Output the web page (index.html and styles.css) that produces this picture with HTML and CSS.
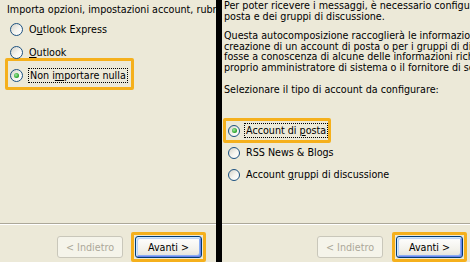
FILE: index.html
```html
<!DOCTYPE html>
<html lang="it">
<head>
    <meta charset="UTF-8">
    <title>Importazione guidata</title>
    <link rel="stylesheet" href="styles.css">
</head>
<body>
    <div class="pane left">
        <div class="content">
            <p class="intro">Importa opzioni, impostazioni account, rubrica e messaggi da:</p>
            <div class="options">
                <div class="option">
                    <span class="radio"></span>
                    <span class="label">O<u>u</u>tlook Express</span>
                </div>
                <div class="option">
                    <span class="radio"></span>
                    <span class="label"><u>O</u>utlook</span>
                </div>
                <div class="option focused">
                    <span class="radio checked"></span>
                    <span class="label dotted">Non i<u>m</u>portare nulla</span>
                </div>
            </div>
        </div>
        <div class="footer">
            <div class="sep"></div>
            <div class="buttons">
                <button class="btn disabled">&lt; Indietro</button>
                <div class="ring"><button class="btn primary">Avanti &gt;</button></div>
            </div>
        </div>
    </div>

    <div class="divider"></div>

    <div class="pane right">
        <div class="content">
            <p class="text">Per poter ricevere i messaggi, è necessario configurare un account di<br>posta e dei gruppi di discussione.</p>
            <p class="text gap">Questa autocomposizione raccoglierà le informazioni necessarie per la<br>creazione di un account di posta o per i gruppi di discussione. Se non si<br>fosse a conoscenza di alcune delle informazioni richieste, contattare il<br>proprio amministratore di sistema o il fornitore di servizi Internet.</p>
            <p class="text gap2">Selezionare il tipo di account da configurare:</p>
            <div class="options">
                <div class="option focused">
                    <span class="radio checked"></span>
                    <span class="label dotted">Account di <u>p</u>osta</span>
                </div>
                <div class="option">
                    <span class="radio"></span>
                    <span class="label">RSS News &amp; Blogs</span>
                </div>
                <div class="option">
                    <span class="radio"></span>
                    <span class="label">Account <u>g</u>ruppi di discussione</span>
                </div>
            </div>
        </div>
        <div class="footer">
            <div class="sep"></div>
            <div class="buttons">
                <button class="btn disabled">&lt; Indietro</button>
                <div class="ring"><button class="btn primary">Avanti &gt;</button></div>
            </div>
        </div>
    </div>
</body>
</html>
```

FILE: styles.css
```css
body {
    margin: 0;
    width: 470px;
    height: 262px;
    display: flex;
    background: #000;
    font-family: "DejaVu Sans", sans-serif;
    font-size: 9.6px;
    color: #000;
    overflow: hidden;
}
.pane {
    display: flex;
    flex-direction: column;
    height: 262px;
    background: #ece9d8;
    overflow: hidden;
    white-space: nowrap;
}
.left {
    width: 216px;
}
.divider {
    width: 6px;
    background: #000;
}
.right {
    flex: 1;
}
.content {
    flex: 1;
}
p {
    margin: 0;
}
.intro {
    padding: 4px 0 0 7px;
    line-height: 12px;
}
.text {
    padding-left: 2px;
    line-height: 10.5px;
}
.right .text:first-child {
    padding-top: 1px;
}
.gap {
    margin-top: 9px;
}
.gap2 {
    margin-top: 12px;
}

/* radio list */
.options {
    display: flex;
    flex-direction: column;
    align-items: flex-start;
    gap: 10px;
}
.left .options {
    padding: 7px 0 0 10px;
}
.right .options {
    padding: 29px 0 0 6px;
}
.option {
    display: flex;
    align-items: center;
    gap: 6px;
    height: 13px;
}
.right .option {
    height: 12px;
}
.option.focused {
    border: 3px solid #f5b01c;
    border-radius: 2px;
}
.left .option.focused {
    margin: -11px 0 -8px -5px;
    padding: 8px 4px 5px 2px;
}
.right .option.focused {
    margin: -7px 0 -6px -5px;
    padding: 4px 1px 3px 2px;
    gap: 5px;
}
.radio {
    position: relative;
    box-sizing: border-box;
    width: 13px;
    height: 13px;
    border: 1px solid #1c5180;
    border-radius: 50%;
    background: linear-gradient(135deg, #d4d2c8, #f6f5f0 55%, #fff);
    flex: none;
}
.right .radio {
    width: 12px;
    height: 12px;
}
.radio.checked::after {
    content: "";
    position: absolute;
    left: 50%;
    top: 50%;
    width: 5px;
    height: 5px;
    margin: -2.5px 0 0 -2.5px;
    border-radius: 50%;
    background: radial-gradient(circle at 40% 40%, #a4e7a4, #21a121 70%);
}
.label u {
    text-decoration-thickness: 1px;
}
.dotted {
    outline: 1px dotted #000;
    padding: 1px;
}

/* footer */
.sep {
    height: 1px;
    background: #aca899;
    border-bottom: 1px solid #fff;
}
.buttons {
    display: flex;
    justify-content: flex-end;
    align-items: center;
    margin-top: 7px;
}
.left .buttons {
    gap: 8px;
    padding-right: 10px;
}
.right .buttons {
    gap: 9px;
    padding-right: 3px;
}
.ring {
    border: 3px solid #f5b01c;
    border-radius: 2px;
    padding: 1px;
}
.btn {
    box-sizing: border-box;
    width: 66px;
    height: 22px;
    font: inherit;
    border-radius: 3px;
    padding: 0;
}
.btn.disabled {
    border: 1px solid #c9c7ba;
    background: #f5f4ea;
    color: #aca899;
}
.btn.primary {
    width: 67px;
    border: 1px solid #003c74;
    color: #000;
    background: linear-gradient(#fff, #f3f2ec 60%, #e3e0d6);
    box-shadow: inset 1px 1px 0 #cee7ff, inset -1px -1px 0 #6982ee, inset 2px 2px 0 #bcd4f6, inset -2px -2px 0 #89adf4;
}
```
